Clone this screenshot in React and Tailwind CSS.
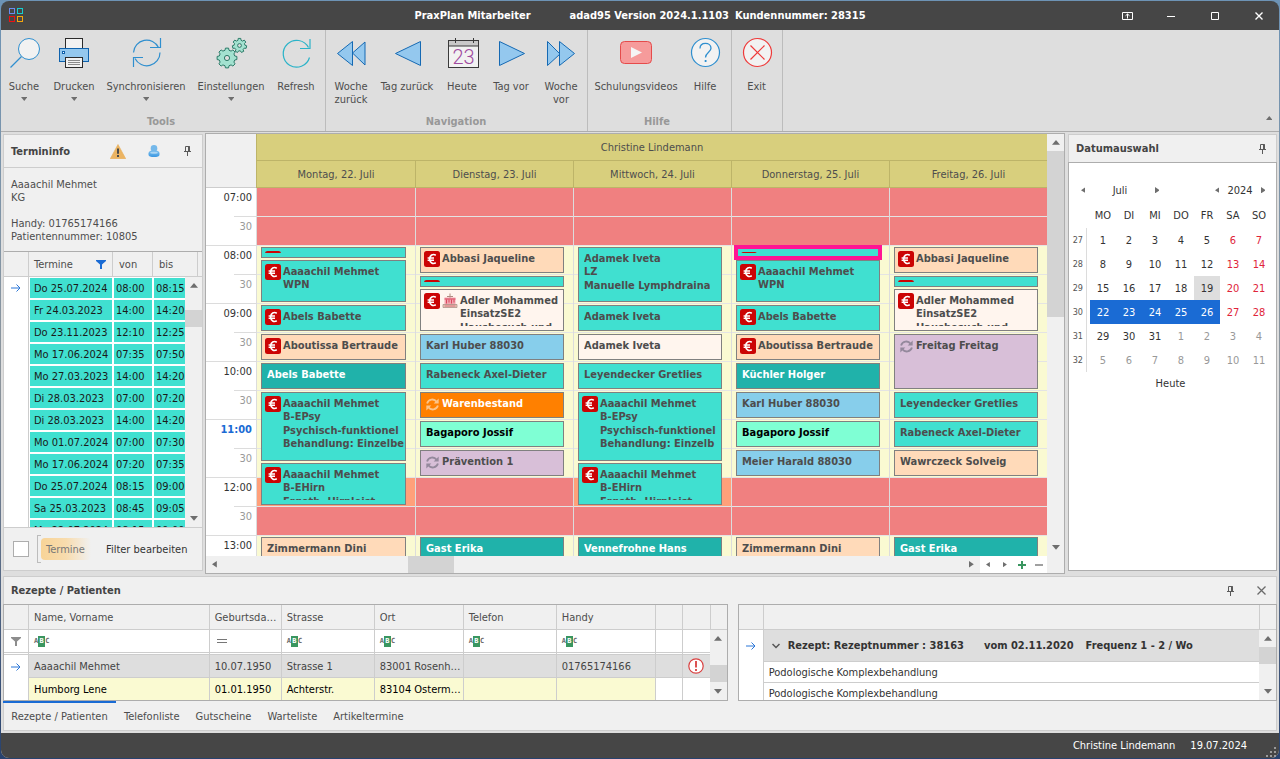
import React from "react";

/* ---------- small drawings ---------- */

const TRI = {
  up: "M0 6L5 0L10 6Z",
  down: "M0 0H10L5 6Z",
  left: "M6 0V8L0 4Z",
  right: "M0 0V8L6 4Z",
};

function Tri({ dir, small }) {
  const horizontal = dir === "left" || dir === "right";
  const w = horizontal ? 6 : 10;
  const h = horizontal ? 8 : 6;
  const k = small ? 0.65 : 0.8;
  return (
    <svg width={w * k} height={h * k} viewBox={`0 0 ${w} ${h}`} className="block" aria-hidden="true">
      <path d={TRI[dir]} fill="#6e6e6e" />
    </svg>
  );
}

function Icon({ children }) {
  return (
    <svg width="32" height="32" viewBox="0 0 32 32" fill="none" className="block overflow-visible" aria-hidden="true">
      {children}
    </svg>
  );
}

function gearPath(cx, cy, outer, inner, teeth) {
  const pts = [];
  const step = (Math.PI * 2) / teeth;
  for (let i = 0; i < teeth; i++) {
    const a = i * step - Math.PI / 2;
    [
      [inner, -0.32],
      [outer, -0.2],
      [outer, 0.2],
      [inner, 0.32],
    ].forEach(([r, t]) => pts.push(`${(cx + r * Math.cos(a + t * step)).toFixed(2)} ${(cy + r * Math.sin(a + t * step)).toFixed(2)}`));
  }
  return `M${pts.join("L")}Z`;
}

const SearchIcon = () => (
  <Icon>
    <circle cx="21" cy="12" r="10.5" fill="#f2f2f2" stroke="#2f8fcf" />
    <path d="M2.5 30.5L13.5 19.5" stroke="#2f8fcf" strokeWidth="1.2" />
  </Icon>
);

const PrinterIcon = () => (
  <Icon>
    <rect x="7.5" y="1.5" width="17" height="11" fill="#f2f2f2" stroke="#2b2b2b" />
    <rect x="1.5" y="11.5" width="29" height="13" fill="#94c8ee" stroke="#0f62ad" />
    <rect x="4.5" y="14.5" width="2" height="2" fill="#fff" stroke="#0f62ad" />
    <rect x="7.5" y="20.5" width="17" height="10" fill="#f2f2f2" stroke="#2b2b2b" />
    <path d="M10 23.5H22M10 25.5H22M10 27.5H22" stroke="#8a8a8a" />
  </Icon>
);

const SyncIcon = () => (
  <Icon>
    <path d="M3.5 15.5A13.2 13.2 0 0 1 28.5 10.5M30.5 1V10.5H20" stroke="#2f8fcf" strokeWidth="1.2" />
    <path d="M30 15.5A13.2 13.2 0 0 1 5 21.5M3.5 30V20.5H13" stroke="#2f8fcf" strokeWidth="1.2" />
  </Icon>
);

const GearsIcon = () => (
  <Icon>
    <path d={gearPath(12, 21, 10, 8, 8)} fill="#a3e2d0" stroke="#2d7a68" strokeLinejoin="round" />
    <circle cx="12" cy="21" r="2.6" fill="#dedede" stroke="#2d7a68" />
    <path d={gearPath(24.5, 8.5, 7.2, 5.4, 7)} fill="#a3e2d0" stroke="#2d7a68" strokeLinejoin="round" />
    <circle cx="24.5" cy="8.5" r="1.9" fill="#dedede" stroke="#2d7a68" />
  </Icon>
);

const RefreshIcon = () => (
  <Icon>
    <path d="M29.5 20.5A13.4 13.4 0 1 1 28.5 10.5M30 2V11.5H20" stroke="#2bb3c8" strokeWidth="1.2" />
  </Icon>
);

const tri = { fill: "#94c8ee", stroke: "#1569b3" };
const WeekBackIcon = () => (
  <Icon>
    <path d="M17.5 16L30 5V28Z" {...tri} />
    <path d="M2.5 16.5L17.5 4.5V28.5Z" {...tri} />
  </Icon>
);
const DayBackIcon = () => (
  <Icon>
    <path d="M4.5 16.5L29.5 4.5V28.5Z" {...tri} />
  </Icon>
);
const TodayIcon = () => (
  <Icon>
    <rect x="2.5" y="3.5" width="30" height="27" fill="#f2f2f2" stroke="#3a3a3a" />
    <rect x="3" y="4" width="29" height="5" fill="#c9c9c9" />
    <path d="M2.5 9H32.5" stroke="#3a3a3a" />
    <path d="M9.5 1V6M27.5 1V6" stroke="#3a3a3a" />
    <text x="17.5" y="27" textAnchor="middle" fontSize="20" fontFamily="Roboto, sans-serif" fontWeight="300" fill="#a04ca0">
      23
    </text>
  </Icon>
);
const DayForwardIcon = () => (
  <Icon>
    <path d="M4.5 4.5V28.5L29.5 16.5Z" {...tri} />
  </Icon>
);
const WeekForwardIcon = () => (
  <Icon>
    <path d="M2.5 4.5V28.5L15 17Z" {...tri} />
    <path d="M14.5 4.5V28.5L29.5 16.5Z" {...tri} />
  </Icon>
);
const VideoIcon = () => (
  <Icon>
    <rect x="0.5" y="4.5" width="31" height="22" rx="4" fill="#f69b9b" stroke="#e54b4b" />
    <path d="M11 10V21L22 15.5Z" fill="#f5f5f5" />
  </Icon>
);
const HelpIcon = () => (
  <Icon>
    <circle cx="16.5" cy="15.5" r="14" fill="#f2f2f2" stroke="#2f8fcf" strokeWidth="1.2" />
    <path d="M11 11.5C11 8 13.5 6.3 16.5 6.3S22 8.2 22 11.2C22 15 16.5 15.5 16.5 20.5" stroke="#2f8fcf" strokeWidth="1.3" />
    <rect x="15.7" y="23" width="1.8" height="2" fill="#2f8fcf" />
  </Icon>
);
const ExitIcon = () => (
  <Icon>
    <circle cx="16.5" cy="15.5" r="14" fill="#f2f2f2" stroke="#ee3a3a" strokeWidth="1.2" />
    <path d="M9.5 8.5L23.5 22.5M23.5 8.5L9.5 22.5" stroke="#ee3a3a" strokeWidth="1.2" />
  </Icon>
);

const Pin = () => (
  <svg width="9" height="10" viewBox="0 0 9 10" className="block" aria-hidden="true">
    <path d="M2.5 0.5H6.5V5.5H2.5ZM1 5.5H8M4.5 5.5V10" fill="none" stroke="#5a5a5a" />
    <path d="M5 0.5H7V5.5H5Z" fill="#5a5a5a" />
  </svg>
);

const RowArrow = () => (
  <svg width="10" height="8" viewBox="0 0 10 8" className="mx-auto block" aria-hidden="true">
    <path d="M0 4H9M5.5 0.5L9 4L5.5 7.5" fill="none" stroke="#2a76d8" />
  </svg>
);

const Funnel = ({ color }) => (
  <svg width="10" height="9" viewBox="0 0 10 9" className="block" aria-hidden="true">
    <path d="M0 0H10V1L6 4.5V9H4V4.5L0 1Z" fill={color} />
  </svg>
);

const EuroIcon = () => (
  <svg width="16" height="16" viewBox="0 0 16 16" className="block shrink-0" aria-hidden="true">
    <rect width="16" height="16" rx="2.5" fill="#cb0404" />
    <path d="M11.8 4.2C9 2.6 5.700 4 5.7 8S9 13.4 11.8 11.8M3.6 7H10M3.6 9.3H10" fill="none" stroke="#fff" strokeWidth="1.6" />
  </svg>
);

const CakeIcon = () => (
  <svg width="16" height="16" viewBox="0 0 16 16" className="block shrink-0" aria-hidden="true">
    <path d="M8 0.5V5M5 3.5H11" stroke="#b08a80" />
    <path d="M2.5 4.5H13.5V12H2.5Z" fill="#f3a6b0" />
    <path d="M2.5 6H13.5M4.5 6.5V10.5M7 6.5V9.5M9.5 6.5V10.5M12 6.5V9.5" stroke="#d9485f" />
    <path d="M1 11.5H15V14.5H1Z" fill="#e8c9b8" stroke="#a58a80" strokeWidth="0.7" />
    <path d="M2.5 13H13.5" stroke="#d86a78" />
  </svg>
);

const RepeatIcon = ({ light }) => (
  <svg width="13" height="13" viewBox="0 0 12 12" className="block shrink-0" aria-hidden="true">
    <path d="M1 5A5 5 0 0 1 9.8 3.4M11 7A5 5 0 0 1 2.2 8.6" fill="none" stroke={light ? "#fbc48a" : "#94899c"} strokeWidth="1.7" />
    <path d="M11.7 0.4V5H7.1ZM0.3 11.6V7H4.9Z" fill={light ? "#fbc48a" : "#94899c"} />
  </svg>
);

const AlertIcon = () => (
  <svg width="16" height="16" viewBox="0 0 16 16" className="mx-auto block" aria-label="Hinweis">
    <circle cx="8" cy="8" r="7.2" fill="#fff" stroke="#d94040" strokeWidth="1.2" />
    <path d="M8 3V9.5M8 11V13" stroke="#d94040" strokeWidth="1.8" />
  </svg>
);

const WarningIcon = () => (
  <svg width="16" height="15" viewBox="0 0 16 15" className="block" aria-hidden="true">
    <path d="M8 0.5L15.7 14.7H0.3Z" fill="#ecb462" stroke="#e6ac58" strokeLinejoin="round" strokeWidth="0.6" />
    <path d="M8 4.5V9.8M8 11V13" stroke="#4a4a4a" strokeWidth="2" />
  </svg>
);

const PersonIcon = () => (
  <svg width="12" height="12" viewBox="0 0 12 12" className="block" aria-hidden="true">
    <defs>
      <linearGradient id="person" x1="0" y1="0" x2="0" y2="1">
        <stop offset="0" stopColor="#7fc1ee" />
        <stop offset="1" stopColor="#3a97e2" />
      </linearGradient>
    </defs>
    <path d="M0.5 8.5C0.5 6 3 5.5 6 5.500S11.500 6 11.500 8.500V9.500C11.500 11.500 9 12 6 12S0.500 11.500 0.500 9.500Z" fill="url(#person)" />
    <circle cx="6" cy="3.4" r="3.3" fill="#74b8ea" />
    <ellipse cx="6" cy="7.8" rx="3.8" ry="1" fill="#d5edfb" opacity="0.6" />
  </svg>
);

const AbcIcon = () => (
  <span className="inline-flex items-center font-['DejaVu_Sans_Mono',monospace] text-[7px] leading-[11px] font-bold text-[#6a6a6a]" aria-hidden="true">
    A<span className="w-[7px] bg-[#3a9660] text-center text-white">B</span>C
  </span>
);

/* ---------- ribbon ---------- */

const ribbon = [
  {
    name: "Tools",
    pad: "pr-1",
    items: [
      ["Suche", SearchIcon, "w-[46px]", true],
      ["Drucken", PrinterIcon, "w-[54px]", true],
      ["Synchronisieren", SyncIcon, "w-[90px]", true],
      ["Einstellungen", GearsIcon, "w-[80px]", true],
      ["Refresh", RefreshIcon, "w-[50px]"],
    ],
  },
  {
    name: "Navigation",
    pad: "pr-px",
    items: [
      ["Woche zurück", WeekBackIcon, "w-[50px]"],
      ["Tag zurück", DayBackIcon, "w-[62px]"],
      ["Heute", TodayIcon, "w-[48px]"],
      ["Tag vor", DayForwardIcon, "w-[50px]"],
      ["Woche vor", WeekForwardIcon, "w-[50px]"],
    ],
  },
  {
    name: "Hilfe",
    pad: "pr-[5px]",
    items: [
      ["Schulungsvideos", VideoIcon, "w-[96px]"],
      ["Hilfe", HelpIcon, "w-[42px]"],
    ],
  },
  { name: "", pad: "pr-px", items: [["Exit", ExitIcon, "w-[49px]"]] },
];

function Ribbon() {
  return (
    <nav className="flex h-[102px] shrink-0 border-b border-[#adadad] bg-[#dedede]" aria-label="Menüband">
      {ribbon.map((group, i) => (
        <section key={i} className={`flex flex-col border-r border-[#bcbcbc] ${group.pad}`}>
          <div className="flex flex-1">
            {group.items.map(([label, Pic, width, menu]) => (
              <button key={label} type="button" className={`flex flex-col items-center pt-[7px] ${width}`}>
                <Pic />
                <span className={`mt-[11px] ${label.startsWith("Woche") ? "w-10" : "whitespace-nowrap"}`}>{label}</span>
                {menu && (
                  <span className="mt-1">
                    <Tri dir="down" small />
                  </span>
                )}
              </button>
            ))}
          </div>
          <h2 className="h-4 text-center font-bold text-[#989898]">{group.name}</h2>
        </section>
      ))}
      <button type="button" aria-label="Menüband minimieren" className="mt-auto mr-[7px] mb-[11px] ml-auto">
        <Tri dir="up" small />
      </button>
    </nav>
  );
}

/* ---------- scroll bars ---------- */

function VScroll({ before, thumb, className }) {
  return (
    <div className={`flex w-[17px] flex-col bg-[#f0f0f0] ${className}`}>
      <button type="button" aria-label="Nach oben" className="flex h-[17px] shrink-0 items-center justify-center">
        <Tri dir="up" />
      </button>
      <div className="min-h-0 flex-1">
        <div className={before} />
        <div className={`bg-[#d3d3d3] ${thumb}`} />
      </div>
      <button type="button" aria-label="Nach unten" className="flex h-[17px] shrink-0 items-center justify-center">
        <Tri dir="down" />
      </button>
    </div>
  );
}

/* ---------- appointment info ---------- */

const termine = [
  ["Do 25.07.2024", "08:00", "08:15"],
  ["Fr 24.03.2023", "14:00", "14:20"],
  ["Do 23.11.2023", "12:10", "12:25"],
  ["Mo 17.06.2024", "07:35", "07:50"],
  ["Mo 27.03.2023", "14:00", "14:20"],
  ["Di 28.03.2023", "07:00", "07:20"],
  ["Di 28.03.2023", "14:00", "14:20"],
  ["Mo 01.07.2024", "07:00", "07:30"],
  ["Mo 17.06.2024", "07:20", "07:35"],
  ["Do 25.07.2024", "08:15", "09:00"],
  ["Sa 25.03.2023", "08:45", "09:05"],
  ["Mo 22.07.2024", "08:15", "09:00"],
];

function TerminInfo() {
  const head = "h-[25px] border-r border-b border-[#cdcdcd] bg-[#f0f0f0] p-0 text-left font-normal";
  const cell = "h-[22px] border border-white bg-[#40e0d0] bg-clip-padding p-0 whitespace-nowrap text-[#1a1a1a]";
  return (
    <aside className="mt-0.5 mb-[3px] flex w-[200px] shrink-0 flex-col border border-[#cdcdcd] bg-[#f0f0f0]">
      <header className="flex h-[33px] shrink-0 items-center border-b border-[#cdcdcd] pl-[7px]">
        <h2 className="w-[99px] font-bold text-[#444]">Termininfo</h2>
        <WarningIcon />
        <span className="ml-[22px]">
          <PersonIcon />
        </span>
        <button type="button" aria-label="Anheften" className="ml-[23px]">
          <Pin />
        </button>
      </header>
      <address className="h-[83px] shrink-0 pt-[10px] pl-[7px] not-italic">
        Aaaachil Mehmet
        <br />
        KG
        <br />
        <br />
        Handy: 01765174166
        <br />
        Patientennummer: 10805
      </address>
      <div className="relative min-h-0 flex-1 overflow-hidden border-t border-[#adadad] bg-white">
        <table className="w-full table-fixed border-separate border-spacing-0">
          <colgroup>
            <col className="w-[25px]" />
            <col className="w-[84px]" />
            <col className="w-[40px]" />
            <col className="w-[45px]" />
            <col />
          </colgroup>
          <thead>
            <tr>
              <th className={head} aria-label="Auswahl" />
              <th className={head}>
                <span className="flex items-center justify-between pr-1.5 pl-[5px]">
                  Termine
                  <Funnel color="#1a6bd4" />
                </span>
              </th>
              <th className={`${head} pl-1.5`}>von</th>
              <th className={`${head} pl-1.5`}>bis</th>
              <th className="border-b border-[#cdcdcd] bg-[#f0f0f0] p-0" aria-label="Weitere" />
            </tr>
          </thead>
          <tbody>
            {termine.map((t, i) => (
              <tr key={i}>
                <td className="border-r border-[#cdcdcd] p-0">{i === 0 && <RowArrow />}</td>
                <td className={`${cell} pl-1`}>{t[0]}</td>
                <td className={`${cell} pl-0.5`}>{t[1]}</td>
                <td className={`${cell} pl-0.5`}>{t[2]}</td>
                <td />
              </tr>
            ))}
          </tbody>
        </table>
        <VScroll before="h-4" thumb="h-[17px]" className="absolute top-[25px] right-0 bottom-0" />
      </div>
      <footer className="flex h-[43px] shrink-0 items-center border-t border-[#cdcdcd] pl-[9px]">
        <input
          type="checkbox"
          aria-label="Filter aktiv"
          className="h-4 w-4 appearance-none border border-[#adadad] bg-white checked:bg-[#1a6bd4]"
        />
        <span className="ml-2 h-[28px] w-1 border border-r-0 border-[#bcbcbc]" />
        <button
          type="button"
          className="flex h-[22px] w-[50px] items-center rounded-sm bg-linear-to-r from-[#f8d497] via-[#f8dcae] to-[#f0f0f0] pl-[5px] text-[#777]"
        >
          Termine
        </button>
        <button type="button" className="ml-[15px] whitespace-nowrap text-[#333]">
          Filter bearbeiten
        </button>
      </footer>
    </aside>
  );
}

/* ---------- scheduler ---------- */

const tone = {
  turquoise: "bg-[#40e0d0]",
  peach: "bg-[#ffdab9]",
  sea: "bg-[#20b2aa] text-white",
  sky: "bg-[#87ceeb]",
  shell: "bg-[#fff5ee]",
  orange: "bg-[#ff8000] text-white",
  aqua: "bg-[#7fffd4] text-black",
  thistle: "bg-[#d8bfd8]",
};

const week = [
  {
    day: "Montag, 22. Juli",
    overlap: true,
    items: [
      { top: 59, height: 11, tone: "turquoise", icons: "e", lines: [] },
      { top: 72, height: 42, tone: "turquoise", icons: "e", lines: ["Aaaachil Mehmet", "WPN"] },
      { top: 117, height: 26, tone: "turquoise", icons: "e", lines: ["Abels Babette"] },
      { top: 146, height: 26, tone: "peach", icons: "e", lines: ["Aboutissa Bertraude"] },
      { top: 175, height: 26, tone: "sea", lines: ["Abels Babette"] },
      { top: 204, height: 69, tone: "turquoise", icons: "e", lines: ["Aaaachil Mehmet", "B-EPsy"], note: ["Psychisch-funktionel", "Behandlung: Einzelbe"] },
      { top: 275, height: 42, tone: "turquoise", icons: "e", lines: ["Aaaachil Mehmet", "B-EHirn"], note: ["Ergoth. Hirnleist."] },
      { top: 349, height: 26, tone: "peach", lines: ["Zimmermann Dini"] },
    ],
  },
  {
    day: "Dienstag, 23. Juli",
    items: [
      { top: 59, height: 26, tone: "peach", icons: "e", lines: ["Abbasi Jaqueline"] },
      { top: 88, height: 11, tone: "turquoise", icons: "e", lines: [] },
      { top: 101, height: 42, tone: "shell", icons: "ec", lines: ["Adler Mohammed", "EinsatzSE2"], note: ["Hausbesuch und"] },
      { top: 146, height: 26, tone: "sky", lines: ["Karl Huber 88030"] },
      { top: 175, height: 26, tone: "turquoise", lines: ["Rabeneck Axel-Dieter"] },
      { top: 204, height: 26, tone: "orange", icons: "l", lines: ["Warenbestand"] },
      { top: 233, height: 26, tone: "aqua", lines: ["Bagaporo Jossif"] },
      { top: 262, height: 26, tone: "thistle", icons: "r", lines: ["Prävention 1"] },
      { top: 349, height: 26, tone: "sea", lines: ["Gast Erika"] },
    ],
  },
  {
    day: "Mittwoch, 24. Juli",
    overlap: true,
    items: [
      { top: 59, height: 55, tone: "turquoise", lines: ["Adamek Iveta", "LZ"], note: ["Manuelle Lymphdraina"] },
      { top: 117, height: 26, tone: "turquoise", lines: ["Adamek Iveta"] },
      { top: 146, height: 26, tone: "shell", lines: ["Adamek Iveta"] },
      { top: 175, height: 26, tone: "turquoise", lines: ["Leyendecker Gretlies"] },
      { top: 204, height: 69, tone: "turquoise", icons: "e", lines: ["Aaaachil Mehmet", "B-EPsy"], note: ["Psychisch-funktionel", "Behandlung: Einzelb"] },
      { top: 275, height: 42, tone: "turquoise", icons: "e", lines: ["Aaaachil Mehmet", "B-EHirn"], note: ["Ergoth. Hirnleist."] },
      { top: 349, height: 26, tone: "sea", lines: ["Vennefrohne Hans"] },
    ],
  },
  {
    day: "Donnerstag, 25. Juli",
    items: [
      { top: 59, height: 11, tone: "turquoise", icons: "e", lines: [], selected: true },
      { top: 72, height: 42, tone: "turquoise", icons: "e", lines: ["Aaaachil Mehmet", "WPN"] },
      { top: 117, height: 26, tone: "turquoise", icons: "e", lines: ["Abels Babette"] },
      { top: 146, height: 26, tone: "peach", icons: "e", lines: ["Aboutissa Bertraude"] },
      { top: 175, height: 26, tone: "sea", lines: ["Küchler Holger"] },
      { top: 204, height: 26, tone: "sky", lines: ["Karl Huber 88030"] },
      { top: 233, height: 26, tone: "aqua", lines: ["Bagaporo Jossif"] },
      { top: 262, height: 26, tone: "sky", lines: ["Meier Harald 88030"] },
      { top: 349, height: 26, tone: "peach", lines: ["Zimmermann Dini"] },
    ],
  },
  {
    day: "Freitag, 26. Juli",
    items: [
      { top: 59, height: 26, tone: "peach", icons: "e", lines: ["Abbasi Jaqueline"] },
      { top: 88, height: 11, tone: "turquoise", icons: "e", lines: [] },
      { top: 101, height: 42, tone: "shell", icons: "e", lines: ["Adler Mohammed", "EinsatzSE2"], note: ["Hausbesuch und"] },
      { top: 146, height: 55, tone: "thistle", icons: "r", lines: ["Freitag Freitag"] },
      { top: 204, height: 26, tone: "turquoise", lines: ["Leyendecker Gretlies"] },
      { top: 233, height: 26, tone: "turquoise", lines: ["Rabeneck Axel-Dieter"] },
      { top: 262, height: 26, tone: "peach", lines: ["Wawrczeck Solveig"] },
      { top: 349, height: 26, tone: "sea", lines: ["Gast Erika"] },
    ],
  },
];

const slots = Array.from({ length: 13 }, (_, i) => i);
const apptIcon = {
  e: <EuroIcon key="e" />,
  c: <CakeIcon key="c" />,
  r: <RepeatIcon key="r" />,
  l: <RepeatIcon key="l" light />,
};

function Appointment({ item }) {
  const icons = (item.icons || "").split("").filter(Boolean);
  const repeat = icons[0] === "r" || icons[0] === "l";
  return (
    <article
      className={`absolute right-[9px] left-1 border pt-[3px] pr-px pb-1 font-bold ${tone[item.tone]} ${
        item.selected ? "border-2 border-[#ff1493] pt-0.5 pb-[3px] ring-2 ring-[#ff1493]" : "border-[#808080]"
      } ${icons.length && !repeat ? "pl-[3px]" : "pl-[5px]"}`}
      style={{ top: item.top, height: item.height }}
    >
      <div className="flex h-full gap-0.5 overflow-hidden whitespace-nowrap">
        {repeat ? <span className="w-[14px] shrink-0 pt-0.5">{apptIcon[icons[0]]}</span> : icons.map((c) => apptIcon[c])}
        <div className="min-w-0 pt-px">
          {item.lines.map((l) => (
            <p key={l}>{l}</p>
          ))}
          {item.note && (
            <div className="pt-px">
              {item.note.map((l) => (
                <p key={l}>{l}</p>
              ))}
            </div>
          )}
        </div>
      </div>
    </article>
  );
}

function Scheduler() {
  return (
    <main className="mt-px flex min-w-0 flex-1 border border-[#adadad] bg-[#f0f0f0]">
      <div className="flex min-w-0 flex-1 flex-col">
        <div className="flex h-[54px] shrink-0">
          <div className="w-[50px] shrink-0 border-b border-[#cdcdcd]" />
          <div className="flex-1 border-l border-[#bdb468] bg-[#d8cf7d]">
            <div className="flex h-[27px] items-center justify-center border-b border-[#bdb468]">Christine Lindemann</div>
            <div className="grid h-[27px] grid-cols-5">
              {week.map((d, i) => (
                <div key={d.day} className={`flex items-center justify-center border-b border-[#bdb468] ${i ? "border-l" : ""}`}>
                  {d.day}
                </div>
              ))}
            </div>
          </div>
        </div>
        <div className="flex min-h-0 flex-1 overflow-hidden">
          <div className="w-[50px] shrink-0 bg-white text-right">
            {slots.map((s) => {
              const hour = `${String(7 + s / 2).padStart(2, "0")}:00`;
              return s % 2 === 0 ? (
                <div key={s} className="h-[29px] pt-[3px] pr-1">
                  <span className={hour === "11:00" ? "font-bold text-[#1a6bd4]" : "text-[#333]"}>{hour}</span>
                </div>
              ) : (
                <div key={s} className="flex h-[29px] border-b border-[#dcdcdc] text-[#999]">
                  <span className="mt-[-1px] ml-auto w-[22px] border-t border-[#dcdcdc] pt-[3px] pr-1">30</span>
                </div>
              );
            })}
          </div>
          <div className="grid flex-1 grid-cols-5 overflow-hidden border-l border-[#dcdcdc]">
            {week.map((d, c) => (
              <div key={d.day} className={`relative border-[#dcdcdc] ${c ? "border-l" : ""}`}>
                {slots.map((s) => (
                  <div
                    key={s}
                    className={`h-[29px] border-b border-[#e4e4e4] ${
                      s < 2 || s === 11 || (s === 10 && !d.overlap) ? "bg-[#f08080]" : s === 10 ? "bg-[#ffa07a]" : "bg-[#fafad2]"
                    }`}
                  />
                ))}
                {d.items.map((item, i) => (
                  <Appointment key={i} item={item} />
                ))}
              </div>
            ))}
          </div>
        </div>
        <div className="flex h-[17px] shrink-0">
          <button type="button" aria-label="Nach links" className="flex w-[17px] items-center justify-center">
            <Tri dir="left" />
          </button>
          <div className="flex flex-1">
            <div className="w-[185px]" />
            <div className="w-[46px] bg-[#d3d3d3]" />
          </div>
          <button type="button" aria-label="Nach rechts" className="flex w-[17px] items-center justify-center">
            <Tri dir="right" />
          </button>
          <div className="grid w-[67px] grid-cols-4 items-center justify-items-center bg-white">
            <button type="button" aria-label="Zurück">
              <Tri dir="left" small />
            </button>
            <button type="button" aria-label="Vor">
              <Tri dir="right" small />
            </button>
            <button type="button" aria-label="Vergrößern">
              <svg width="8" height="8" viewBox="0 0 8 8" className="block">
                <path d="M4 0V8M0 4H8" stroke="#3a9660" strokeWidth="2" />
              </svg>
            </button>
            <button type="button" aria-label="Verkleinern">
              <svg width="8" height="8" viewBox="0 0 8 8" className="block">
                <path d="M0 4H8" stroke="#a0a0a0" strokeWidth="2" />
              </svg>
            </button>
          </div>
        </div>
      </div>
      <VScroll before="h-0" thumb="h-[166px]" className="mb-[17px]" />
    </main>
  );
}

/* ---------- date picker ---------- */

const weeks = [
  [27, 1],
  [28, 8],
  [29, 15],
  [30, 22],
  [31, 29],
  [32, 36],
];

function DatePicker() {
  const arrow = "flex h-4 w-4 items-center justify-center";
  return (
    <aside className="mt-0.5 mb-[3px] flex w-[209px] shrink-0 flex-col">
      <header className="flex h-[28px] shrink-0 items-center border border-b-0 border-[#cdcdcd] bg-[#f0f0f0] pr-[9px] pl-[7px]">
        <h2 className="font-bold text-[#444]">Datumauswahl</h2>
        <button type="button" aria-label="Anheften" className="ml-auto">
          <Pin />
        </button>
      </header>
      <div className="flex-1 border border-[#adadad] bg-white text-[#333]">
        <div className="mt-[19px] ml-1.5 flex items-center">
          <button type="button" aria-label="Voriger Monat" className={arrow}>
            <Tri dir="left" />
          </button>
          <span className="w-[58px] text-center">Juli</span>
          <button type="button" aria-label="Nächster Monat" className={arrow}>
            <Tri dir="right" />
          </button>
          <button type="button" aria-label="Voriges Jahr" className={`${arrow} ml-[44px]`}>
            <Tri dir="left" />
          </button>
          <span className="w-[30px] text-center">2024</span>
          <button type="button" aria-label="Nächstes Jahr" className={arrow}>
            <Tri dir="right" />
          </button>
        </div>
        <table className="mt-[5px] w-[203px] table-fixed border-separate border-spacing-0 text-center">
          <colgroup>
            <col className="w-[21px]" />
          </colgroup>
          <thead>
            <tr className="h-[25px]">
              <th aria-label="Woche" />
              {["MO", "DI", "MI", "DO", "FR", "SA", "SO"].map((d) => (
                <th key={d} className="p-0 font-normal">
                  {d}
                </th>
              ))}
            </tr>
          </thead>
          <tbody>
            {weeks.map(([no, first]) => (
              <tr key={no} className="h-6">
                <th className="p-0 font-normal">
                  <span className="flex h-6 w-[18px] items-center justify-end border-r border-[#dcdcdc] pr-[3px] text-[9px] text-[#555]">{no}</span>
                </th>
                {[0, 1, 2, 3, 4, 5, 6].map((k) => {
                  const n = first + k;
                  const color =
                    n > 31
                      ? "text-[#999]"
                      : no === 30 && k < 5
                        ? "bg-[#1a6bd4] text-white"
                        : n === 19
                          ? "bg-[#dedede]"
                          : k > 4
                            ? "text-[#e0243a]"
                            : "";
                  return (
                    <td key={k} className={`p-0 ${color}`}>
                      {n > 31 ? n - 31 : n}
                    </td>
                  );
                })}
              </tr>
            ))}
          </tbody>
        </table>
        <button type="button" className="mt-[5px] block w-[203px] text-center">
          Heute
        </button>
      </div>
    </aside>
  );
}

/* ---------- patients ---------- */

const patients = [
  ["Aaaachil Mehmet", "10.07.1950", "Strasse 1", "83001 Rosenheim", "", "01765174166", "", "!"],
  ["Humborg Lene", "01.01.1950", "Achterstr.", "83104 Ostermünchen", "", "", "", ""],
];
const columns = ["Name, Vorname", "Geburtsdatum", "Strasse", "Ort", "Telefon", "Handy", "", ""];

function PatientTable() {
  const line = "border-r border-b border-[#cdcdcd]";
  return (
    <div className="relative h-[97px] min-w-0 flex-[725_1_0%] overflow-hidden border border-[#adadad] bg-white">
      <table className="w-full table-fixed border-separate border-spacing-0">
        <colgroup>
          <col className="w-[25px]" />
          <col />
          <col className="w-[72px]" />
          <col className="w-[93px]" />
          <col className="w-[89px]" />
          <col className="w-[93px]" />
          <col className="w-[99px]" />
          <col className="w-[27px]" />
          <col className="w-[28px]" />
          <col className="w-[16px]" />
        </colgroup>
        <thead>
          <tr className="h-[25px]">
            <th className={`bg-[#f0f0f0] p-0 ${line}`} aria-label="Auswahl" />
            {columns.map((c, i) => (
              <th key={i} className={`truncate bg-[#f0f0f0] p-0 pr-1 pl-[5px] text-left font-normal ${line}`}>
                {c}
              </th>
            ))}
            <th className="border-b border-[#cdcdcd] bg-[#f0f0f0] p-0" aria-label="Bildlauf" />
          </tr>
          <tr className="h-[25px]">
            <td className="border-r border-b-3 border-double border-[#cdcdcd] p-0 pl-[7px]">
              <Funnel color="#8d8d8d" />
            </td>
            {columns.map((c, i) => (
              <td key={i} className="border-r border-b-3 border-double border-[#cdcdcd] p-0 pl-[5px]">
                {c && (
                  <label className="flex items-center">
                    {i === 1 ? (
                      <svg width="10" height="5" viewBox="0 0 10 5" className="ml-0.5 block shrink-0">
                        <path d="M0 0.5H10M0 3.5H10" stroke="#777" />
                      </svg>
                    ) : (
                      <AbcIcon />
                    )}
                    <input type="text" aria-label={`Filter ${c}`} className="h-[15px] w-full min-w-0 bg-transparent outline-none" />
                  </label>
                )}
              </td>
            ))}
            <td />
          </tr>
        </thead>
        <tbody>
          {patients.map((p, r) => (
            <tr key={r} className="h-[23px]">
              <td className="border-r border-[#cdcdcd] p-0">{r === 0 && <RowArrow />}</td>
              {p.map((v, i) => (
                <td
                  key={i}
                  className={`truncate p-0 ${line} ${r === 0 ? "bg-[#dedede] text-[#444]" : i < 6 ? "bg-[#fafad2] text-black" : ""} ${
                    i < 6 ? "pr-px pl-[5px]" : ""
                  }`}
                >
                  {v === "!" ? <AlertIcon /> : v}
                </td>
              ))}
              <td />
            </tr>
          ))}
        </tbody>
      </table>
      <VScroll before="h-[18px]" thumb="h-[17px]" className="absolute top-[25px] right-0 bottom-0" />
    </div>
  );
}

function RecipeTable() {
  return (
    <div className="relative h-[97px] min-w-0 flex-[539_1_0%] overflow-hidden border border-[#adadad] bg-white">
      <table className="w-full table-fixed border-separate border-spacing-0 text-[#333]">
        <colgroup>
          <col className="w-[25px]" />
          <col />
          <col className="w-[16px]" />
        </colgroup>
        <thead>
          <tr className="h-[25px] bg-[#f0f0f0]">
            <th className="border-r border-b border-[#cdcdcd] p-0" aria-label="Auswahl" />
            <th className="border-r border-b border-[#cdcdcd] p-0" aria-label="Rezept" />
            <th className="border-b border-[#cdcdcd] p-0" aria-label="Bildlauf" />
          </tr>
        </thead>
        <tbody>
          <tr className="h-[32px]">
            <td className="border-r border-[#cdcdcd] p-0">
              <RowArrow />
            </td>
            <td className="border-b border-[#cdcdcd] bg-[#dedede] p-0 font-bold whitespace-nowrap">
              <div className="flex items-center pl-2">
                <button type="button" aria-label="Gruppe einklappen" className="mr-2">
                  <svg width="8" height="6" viewBox="0 0 8 6" className="block">
                    <path d="M0.5 1L4 4.5L7.5 1" fill="none" stroke="#555" strokeWidth="1.5" />
                  </svg>
                </button>
                <span>Rezept: Rezeptnummer : 38163</span>
                <span className="ml-5">vom 02.11.2020</span>
                <span className="ml-3">Frequenz 1 - 2 / Wo</span>
              </div>
            </td>
            <td />
          </tr>
          {[0, 1].map((i) => (
            <tr key={i} className="h-[21px]">
              <td className="border-r border-[#cdcdcd] p-0" />
              <td className="border-b border-[#cdcdcd] p-0 pl-[5px]">Podologische Komplexbehandlung</td>
              <td />
            </tr>
          ))}
        </tbody>
      </table>
      <VScroll before="h-0" thumb="h-[17px]" className="absolute top-[25px] right-0 bottom-0" />
    </div>
  );
}

function BottomPanel() {
  const tabs = ["Telefonliste", "Gutscheine", "Warteliste", "Artikeltermine"];
  return (
    <section className="mx-0.5 mt-0.5 mb-0.5 shrink-0 border border-[#cdcdcd] bg-[#f0f0f0]">
      <header className="flex h-[27px] items-center pr-[10px] pl-[7px]">
        <h2 className="font-bold text-[#444]">Rezepte / Patienten</h2>
        <button type="button" aria-label="Anheften" className="ml-auto">
          <Pin />
        </button>
        <button type="button" aria-label="Schließen" className="ml-[22px]">
          <svg width="9" height="9" viewBox="0 0 9 9" className="block">
            <path d="M0.5 0.5L8.5 8.5M8.5 0.5L0.5 8.5" stroke="#6a6a6a" strokeWidth="1.3" />
          </svg>
        </button>
      </header>
      <div className="-mx-px flex gap-[10px]">
        <PatientTable />
        <RecipeTable />
      </div>
      <div className="-mx-px flex h-[29px] gap-4" role="tablist">
        <button type="button" role="tab" aria-selected="true" className="w-[113px] border-t-2 border-[#1a6bd4] whitespace-nowrap">
          Rezepte / Patienten
        </button>
        {tabs.map((t, i) => (
          <button key={t} type="button" role="tab" aria-selected="false" className={`pt-0.5 ${i === 0 ? "-ml-2" : ""}`}>
            {t}
          </button>
        ))}
      </div>
    </section>
  );
}

/* ---------- window ---------- */

function TitleBar() {
  const btn = "flex w-10 items-center justify-center";
  return (
    <header className="grid h-[29px] shrink-0 grid-cols-[1fr_auto_1fr] items-center rounded-t-lg bg-[#464646] font-bold text-white">
      <svg width="15" height="15" viewBox="0 0 15 15" fill="none" className="ml-2 block" aria-hidden="true">
        <rect x="0.5" y="0.5" width="5" height="5" stroke="#6a8cf0" />
        <rect x="8.5" y="0.5" width="5" height="5" stroke="#14cfd0" />
        <rect x="0.5" y="8.5" width="5" height="5" stroke="#ee1111" />
        <rect x="8.5" y="8.5" width="5" height="5" stroke="#f5a60c" />
      </svg>
      <h1 className="flex pb-px whitespace-nowrap">
        <span>PraxPlan Mitarbeiter</span>
        <span className="ml-[39px]">adad95 Version 2024.1.1103</span>
        <span className="ml-1.5">Kundennummer: 28315</span>
      </h1>
      <div className="flex gap-1 justify-self-end self-stretch">
        <button type="button" aria-label="Menüband-Anzeige" className={btn}>
          <svg width="11" height="8" viewBox="0 0 11 8" fill="none" stroke="#fff">
            <path d="M0.5 0.5H10.5V7.5H0.5ZM5.5 2V6.5M3.5 3.8L5.5 2L7.5 3.8" />
          </svg>
        </button>
        <button type="button" aria-label="Minimieren" className={btn}>
          <svg width="8" height="8" viewBox="0 0 8 8" stroke="#fff">
            <path d="M0 4.5H8" />
          </svg>
        </button>
        <button type="button" aria-label="Maximieren" className={btn}>
          <svg width="8" height="8" viewBox="0 0 8 8" fill="none" stroke="#fff">
            <path d="M0.5 0.5H7.5V7.5H0.5Z" />
          </svg>
        </button>
        <button type="button" aria-label="Fenster schließen" className={btn}>
          <svg width="8" height="8" viewBox="0 0 8 8" stroke="#fff" strokeWidth="1.4">
            <path d="M0.5 0.5L7.5 7.5M7.5 0.5L0.5 7.5" />
          </svg>
        </button>
      </div>
    </header>
  );
}

export default function App() {
  return (
    <div className="flex h-screen min-h-[640px] flex-col bg-linear-to-b from-[#6d93b5] via-[#8d959c] to-[#28426e] p-px font-['DejaVu_Sans_Condensed','DejaVu_Sans',sans-serif] text-[11px] leading-[13px] text-[#4d4d4d]">
      <TitleBar />
      <div className="flex min-h-0 flex-1 flex-col rounded-b-lg bg-[#dedede]">
        <Ribbon />
        <div className="flex min-h-0 flex-1 pr-0.5 pl-0.5">
          <TerminInfo />
          <div className="w-0.5 shrink-0" />
          <Scheduler />
          <div className="w-[3px] shrink-0" />
          <DatePicker />
        </div>
        <BottomPanel />
        <footer className="flex h-[25px] shrink-0 items-center justify-end rounded-b-lg bg-[#464646] text-white">
          <span>Christine Lindemann</span>
          <span className="ml-[15px]">19.07.2024</span>
          <svg width="10" height="10" viewBox="0 0 10 10" className="mt-3 mr-[3px] ml-[19px] block" fill="#9a9a9a" aria-hidden="true">
            <path d="M8 0H10V2H8ZM4 4H6V6H4ZM8 4H10V6H8ZM0 8H2V10H0ZM4 8H6V10H4ZM8 8H10V10H8Z" />
          </svg>
        </footer>
      </div>
    </div>
  );
}
